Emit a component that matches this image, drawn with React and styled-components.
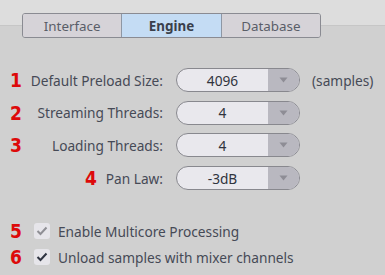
import React, { useState } from 'react';
import styled, { createGlobalStyle } from 'styled-components';

const GlobalStyle = createGlobalStyle`
  html, body {
    margin: 0;
    padding: 0;
    background: #d0d0d0;
  }
  body {
    font-family: "Noto Sans", "Open Sans", sans-serif;
  }
`

const Page = styled.div`
  width: 385px;
  height: 275px;
  box-sizing: border-box;
  background: linear-gradient(to bottom, #dddddd 0, #dddddd 25px, #c6c6c6 25px, #c6c6c6 26px, #d0d0d0 26px);
  padding-top: 13px;
  overflow: hidden;
`

const Tabs = styled.div`
  display: flex;
  margin-left: 22px;
  width: 299px;
  height: 25px;
  box-sizing: border-box;
  border: 1px solid #8a8b92;
  border-radius: 3px;
  overflow: hidden;
`

const Tab = styled.div`
  flex: 1;
  display: flex;
  align-items: center;
  justify-content: center;
  font-size: 13.4px;
  color: ${p => p.active ? '#3a3f4b' : '#5a5e68'};
  font-weight: ${p => p.active ? 700 : 400};
  background: ${p => p.active ? '#c4dcf4' : '#d6d3d8'};
  border-left: ${p => p.first ? 'none' : '1px solid #8e97a4'};
`

const Form = styled.div`
  display: grid;
  grid-template-columns: 29px 137px 124px auto;
  row-gap: 8.7px;
  align-items: center;
  margin-top: 30px;
  padding-left: 10px;
`

const Num = styled.span`
  font-family: "DejaVu Sans", sans-serif;
  font-weight: 700;
  font-stretch: condensed;
  font-size: 20px;
  line-height: 20px;
  color: #dd0a0a;
  display: inline-block;
  transform: scaleX(0.95);
  transform-origin: left center;
  margin-right: ${p => p.inline ? '8px' : '0'};
`

const Label = styled.div`
  display: flex;
  align-items: center;
  justify-content: flex-end;
  font-size: 13.7px;
  color: #464a56;
  white-space: nowrap;
  padding-right: 13px;
  grid-column: ${p => p.wide ? '1 / 3' : 'auto'};
`

const Combo = styled.div`
  display: flex;
  height: 24px;
  box-sizing: border-box;
  border: 1px solid #88888e;
  border-radius: 12px;
  overflow: hidden;
  background: #e9e8ed;
`

const ComboValue = styled.div`
  flex: 1;
  display: flex;
  align-items: center;
  justify-content: center;
  font-size: 13.7px;
  color: #30343e;
`

const ComboArrow = styled.div`
  width: 31px;
  background: #b9b8c0;
  display: flex;
  align-items: center;
  justify-content: center;
`

const Extra = styled.div`
  font-size: 13.7px;
  color: #464a56;
  padding-left: 12px;
`

const Checks = styled.div`
  display: flex;
  flex-direction: column;
  gap: 10px;
  margin-top: 33px;
  padding-left: 10px;
`

const CheckRow = styled.label`
  display: flex;
  align-items: center;
  font-size: 13.7px;
  color: #464a56;
  height: 16px;
`

const CheckNum = styled(Num)`
  width: 24px;
`

const Box = styled.span`
  width: 16px;
  height: 16px;
  border-radius: 3px;
  background: #e6e5ea;
  display: flex;
  align-items: center;
  justify-content: center;
  margin-right: 8px;
`

function Arrow() {
  return (
    <svg width="9" height="6" viewBox="0 0 9 6">
      <path d="M0.5 0.5 L8.5 0.5 L4.5 5.5 Z" fill="#8e8d95" />
    </svg>
  );
}

function Check({ color }) {
  return (
    <svg width="12" height="10" viewBox="0 0 12 10">
      <path d="M1.5 5 L4.5 8 L10.5 1.5" fill="none" stroke={color} strokeWidth="2" />
    </svg>
  );
}

const rows = [
  { n: '1', label: 'Default Preload Size:', value: '4096', extra: '(samples)' },
  { n: '2', label: 'Streaming Threads:', value: '4' },
  { n: '3', label: 'Loading Threads:', value: '4' },
  { n: '4', label: 'Pan Law:', value: '-3dB', inline: true },
];

function App() {
  const [tab, setTab] = useState('Engine');

  return (
    <Page>
      <GlobalStyle />
      <Tabs>
        {['Interface', 'Engine', 'Database'].map((t, i) => (
          <Tab key={t} first={i === 0} active={tab === t} onClick={() => setTab(t)}>{t}</Tab>
        ))}
      </Tabs>
      <Form>
        {rows.map(r => (
          <React.Fragment key={r.n}>
            {r.inline ? (
              <Label wide><Num inline>{r.n}</Num>{r.label}</Label>
            ) : (
              <>
                <Num>{r.n}</Num>
                <Label>{r.label}</Label>
              </>
            )}
            <Combo>
              <ComboValue>{r.value}</ComboValue>
              <ComboArrow><Arrow /></ComboArrow>
            </Combo>
            <Extra>{r.extra}</Extra>
          </React.Fragment>
        ))}
      </Form>
      <Checks>
        <CheckRow>
          <CheckNum>5</CheckNum>
          <Box><Check color="#8f8f95" /></Box>
          Enable Multicore Processing
        </CheckRow>
        <CheckRow>
          <CheckNum>6</CheckNum>
          <Box><Check color="#2f3442" /></Box>
          Unload samples with mixer channels
        </CheckRow>
      </Checks>
    </Page>
  );
}

export default App;
